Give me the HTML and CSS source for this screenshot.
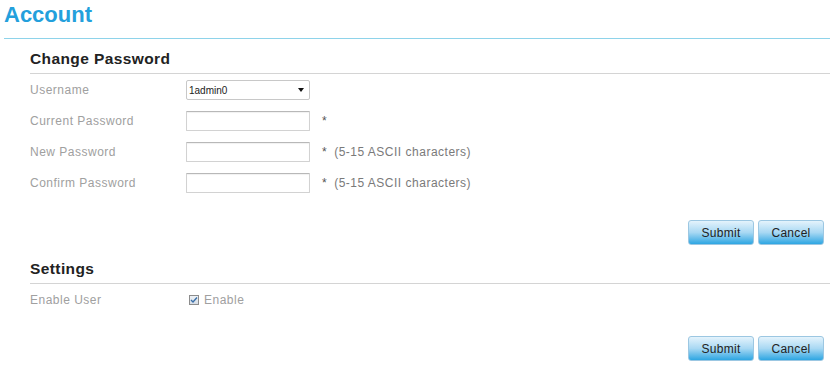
FILE: index.html
```html
<!DOCTYPE html>
<html lang="en">
<head>
    <meta charset="UTF-8">
    <title>Account</title>
    <link rel="stylesheet" href="styles.css">
</head>
<body>
    <div class="page">
        <h1 class="page-title">Account</h1>

        <div class="section">
            <h2 class="section-title">Change Password</h2>

            <div class="form-row">
                <label class="form-label" for="username">Username</label>
                <div class="select-wrap">
                    <select id="username" class="form-select">
                        <option>1admin0</option>
                    </select>
                </div>
            </div>

            <div class="form-row">
                <label class="form-label" for="current-password">Current Password</label>
                <input type="password" id="current-password" class="form-input">
                <span class="form-hint"><span class="req">*</span></span>
            </div>

            <div class="form-row">
                <label class="form-label" for="new-password">New Password</label>
                <input type="password" id="new-password" class="form-input">
                <span class="form-hint"><span class="req">*</span>(5-15 ASCII characters)</span>
            </div>

            <div class="form-row">
                <label class="form-label" for="confirm-password">Confirm Password</label>
                <input type="password" id="confirm-password" class="form-input">
                <span class="form-hint"><span class="req">*</span>(5-15 ASCII characters)</span>
            </div>

            <div class="actions">
                <button type="button" class="btn">Submit</button>
                <button type="button" class="btn">Cancel</button>
            </div>
        </div>

        <div class="section section-settings">
            <h2 class="section-title">Settings</h2>

            <div class="form-row">
                <span class="form-label">Enable User</span>
                <label class="check">
                    <span class="check-box">
                        <svg width="8" height="8" viewBox="0 0 8 8">
                            <path d="M1 4 L3 6 L7 1.5" fill="none" stroke="#3a6fa8" stroke-width="1.4"/>
                        </svg>
                    </span>
                    Enable
                </label>
            </div>

            <div class="actions actions-last">
                <button type="button" class="btn">Submit</button>
                <button type="button" class="btn">Cancel</button>
            </div>
        </div>
    </div>
</body>
</html>
```

FILE: styles.css
```css
body {
    margin: 0;
    background: #ffffff;
    font-family: "Liberation Sans", Arial, sans-serif;
    color: #333333;
}

.page {
    width: 830px;
}

.page-title {
    margin: 0 0 0 4px;
    padding: 2px 0 10px 0;
    height: 26px;
    line-height: 26px;
    font-size: 22px;
    font-weight: bold;
    color: #23a0dc;
    border-bottom: 1px solid #8ed3ea;
}

.section {
    margin-left: 30px;
    padding-top: 11px;
}

.section-settings {
    padding-top: 15px;
}

.section-title {
    margin: 0;
    padding-bottom: 5px;
    height: 18px;
    line-height: 18px;
    font-size: 15.5px;
    font-weight: bold;
    letter-spacing: 0.4px;
    color: #222222;
    border-bottom: 1px solid #d4d4d4;
}

.form-row {
    display: flex;
    align-items: center;
    height: 20px;
    margin-top: 11px;
    font-size: 12px;
    letter-spacing: 0.5px;
}

.section-title + .form-row {
    margin-top: 6px;
}

.form-label {
    width: 156px;
    color: #a0a0a0;
}

.select-wrap {
    position: relative;
    width: 124px;
    height: 20px;
}

.select-wrap::after {
    content: "";
    position: absolute;
    right: 6px;
    top: 8px;
    border-left: 3px solid transparent;
    border-right: 3px solid transparent;
    border-top: 4px solid #111111;
    pointer-events: none;
}

.form-select {
    appearance: none;
    -webkit-appearance: none;
    width: 124px;
    height: 20px;
    margin: 0;
    padding: 0 0 0 2px;
    border: 1px solid #c8c8c8;
    border-radius: 2px;
    background: #ffffff;
    font-family: "Liberation Sans", Arial, sans-serif;
    font-size: 10px;
    letter-spacing: 0;
    color: #222222;
}

.form-input {
    box-sizing: border-box;
    width: 124px;
    height: 20px;
    margin: 0;
    padding: 0 4px;
    border: 1px solid #d2d2d2;
    border-top-color: #b8b8b8;
    border-radius: 1px;
    box-shadow: inset 0 1px 1px rgba(0, 0, 0, 0.06);
    background: #ffffff;
}

.form-hint {
    margin-left: 12px;
    color: #7a7a7a;
    font-size: 12px;
}

.req {
    margin-right: 7px;
    color: #555555;
}

.check {
    display: flex;
    align-items: center;
    gap: 5px;
    margin-left: 3px;
    color: #a0a0a0;
}

.check-box {
    box-sizing: border-box;
    width: 10px;
    height: 10px;
    display: flex;
    align-items: center;
    justify-content: center;
    border: 1px solid #8c8c8c;
    background: linear-gradient(#eef2f6, #d6dde6);
}

.actions {
    display: flex;
    justify-content: flex-end;
    gap: 4px;
    margin-top: 27px;
    padding-right: 6px;
}

.actions-last {
    margin-top: 26px;
}

.btn {
    width: 66px;
    height: 25px;
    padding: 0;
    border: 1px solid #9cc7e2;
    border-radius: 3px;
    background: linear-gradient(#e4f3fc, #a8d8f3 50%, #2ea6e2);
    font-family: "Liberation Sans", Arial, sans-serif;
    font-size: 12px;
    letter-spacing: 0.3px;
    color: #222222;
    cursor: pointer;
}
```
